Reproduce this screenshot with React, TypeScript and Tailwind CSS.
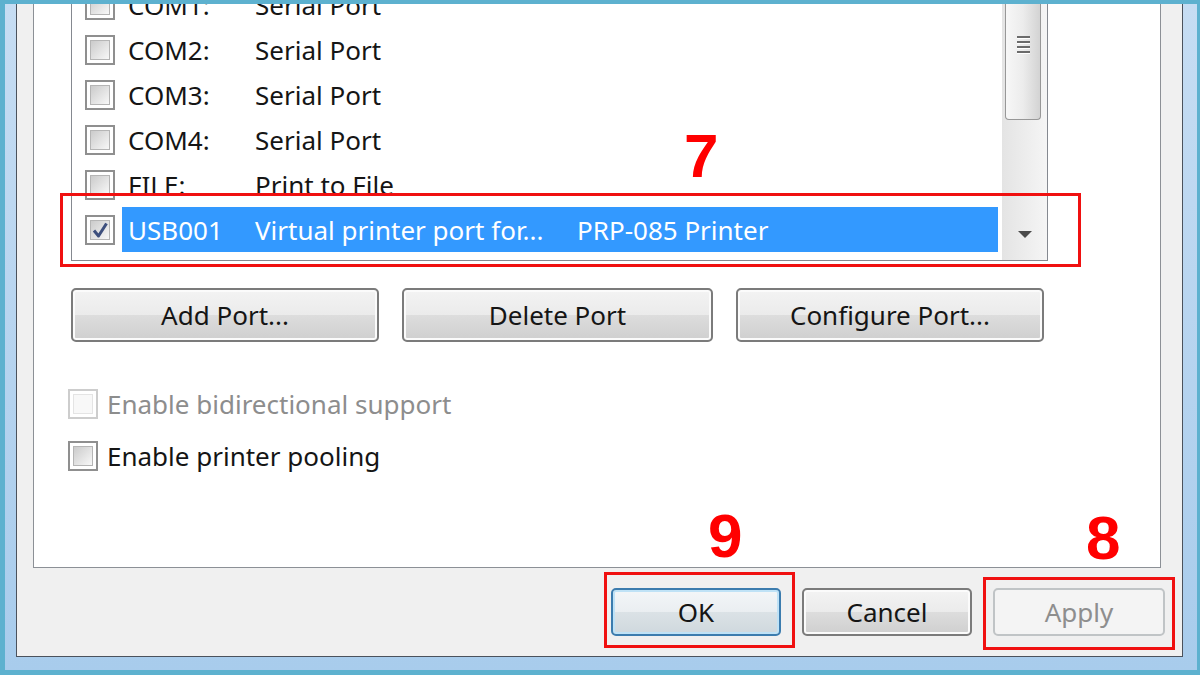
import React from 'react';

type Port = { name: string; desc: string; printer?: string; checked?: boolean; selected?: boolean };

const ports: Port[] = [
  { name: 'COM1:', desc: 'Serial Port' },
  { name: 'COM2:', desc: 'Serial Port' },
  { name: 'COM3:', desc: 'Serial Port' },
  { name: 'COM4:', desc: 'Serial Port' },
  { name: 'FILE:', desc: 'Print to File' },
  { name: 'USB001', desc: 'Virtual printer port for...', printer: 'PRP-085 Printer', checked: true, selected: true },
];

function CheckBox({ checked, disabled }: { checked?: boolean; disabled?: boolean }) {
  return (
    <span
      className={`flex h-[30px] w-[30px] shrink-0 items-center justify-center border-2 bg-white ${
        disabled ? 'border-[#cdcdcd]' : 'border-[#8f8f8f]'
      }`}
    >
      <span
        className={`flex h-[20px] w-[20px] items-center justify-center border ${
          disabled
            ? 'border-[#e4e4e4] bg-[#f8f8f8]'
            : 'border-[#b5b5b5] bg-gradient-to-br from-[#cbcbcb] to-[#f8f8f8]'
        }`}
      >
        {checked && (
          <svg width="18" height="18" viewBox="0 0 18 18">
            <path d="M3 9.5 L7.5 15 L15.5 2.5" fill="none" stroke="#3d4f7d" strokeWidth="3" strokeLinejoin="round" />
          </svg>
        )}
      </span>
    </span>
  );
}

function Button({
  label,
  className,
  kind = 'normal',
}: {
  label: string;
  className: string;
  kind?: 'normal' | 'default' | 'disabled';
}) {
  const look =
    kind === 'default'
      ? 'border-2 border-[#3c7cae] shadow-[inset_0_0_0_2px_#bfe2f6] bg-[linear-gradient(to_bottom,#f3f6f8_0%,#eaeef1_50%,#dbe2e6_50%,#cfd8dd_100%)] text-[#151515]'
      : kind === 'disabled'
        ? 'border-2 border-[#c0c4c6] bg-[#f4f4f4] text-[#8e8e8e]'
        : 'border-2 border-[#7b7b7b] shadow-[inset_0_0_0_2px_#fbfbfb] bg-[linear-gradient(to_bottom,#f3f3f3_0%,#ebebeb_50%,#dddddd_50%,#cfcfcf_100%)] text-[#151515]';
  return (
    <div className={`flex shrink-0 items-center justify-center rounded-[5px] text-[26px] leading-none ${look} ${className}`}>
      {label}
    </div>
  );
}

export default function App() {
  return (
    <div className="relative h-[675px] w-[1200px] overflow-hidden bg-[#5db1cf] pb-[5px] pl-[5px] pr-[3px] pt-[4px] font-['Noto_Sans',sans-serif]">
      {/* window glass frame */}
      <div className="flex h-full flex-col bg-gradient-to-b from-[#c6ddf3] to-[#a8ccec] pb-[13px] pl-[11px] pr-[14px]">
        {/* dialog body */}
        <div className="flex flex-1 flex-col border-x border-b border-[#4b525c] bg-[#f0f0f0]">
          {/* tab page */}
          <div className="ml-[16px] mr-[21px] flex h-[564px] flex-col border-x border-b border-[#8c9096] bg-white">
            {/* port list */}
            <div className="ml-[37px] flex h-[257px] w-[977px] overflow-hidden border-b border-l border-r border-[#858990]">
              <div className="flex-1 overflow-hidden pr-[4px]">
                <div className="-mt-[22px] flex flex-col">
                  {ports.map((p) => (
                    <div key={p.name} className="flex h-[45px] items-center pl-[13px]">
                      <CheckBox checked={p.checked} />
                      <div
                        className={`ml-[7px] flex h-[45px] flex-1 items-center pl-[6px] text-[26px] leading-none ${
                          p.selected ? 'bg-[#3399ff] text-white' : 'text-[#151515]'
                        }`}
                      >
                        <span className="w-[127px] shrink-0">{p.name}</span>
                        <span className="w-[322px] shrink-0">{p.desc}</span>
                        {p.printer && <span>{p.printer}</span>}
                      </div>
                    </div>
                  ))}
                </div>
              </div>
              {/* vertical scrollbar */}
              <div className="flex w-[45px] shrink-0 flex-col bg-gradient-to-r from-[#e4e4e4] to-[#f5f5f5]">
                <div className="ml-[3px] mr-[6px] flex h-[116px] flex-col items-center rounded-b-[4px] border-x border-b border-[#979797] bg-gradient-to-r from-[#f7f7f7] via-[#ececec] to-[#d3d3d3]">
                  <div className="mt-[32px] flex flex-col gap-[3px]">
                    {[0, 1, 2, 3].map((i) => (
                      <span key={i} className="block h-[2px] w-[13px] bg-[#6b6b6b] shadow-[0_1px_0_#ffffff]" />
                    ))}
                  </div>
                </div>
                <div className="flex-1" />
                <div className="flex h-[46px] items-center justify-center pb-[4px]">
                  <svg width="14" height="8" viewBox="0 0 14 8">
                    <path d="M0 0 H14 L7 7 Z" fill="#4a4a4a" />
                  </svg>
                </div>
              </div>
            </div>

            {/* port buttons */}
            <div className="ml-[37px] mt-[27px] flex gap-[23px]">
              <Button label="Add Port..." className="h-[54px] w-[308px]" />
              <Button label="Delete Port" className="h-[54px] w-[311px]" />
              <Button label="Configure Port..." className="h-[54px] w-[308px]" />
            </div>

            {/* options */}
            <div className="ml-[34px] mt-[47px] flex flex-col gap-[22px] text-[26px] leading-none">
              <div className="flex h-[30px] items-center gap-[9px] text-[#8d8d8d]">
                <CheckBox disabled />
                <span>Enable bidirectional support</span>
              </div>
              <div className="flex h-[30px] items-center gap-[9px] text-[#151515]">
                <CheckBox />
                <span>Enable printer pooling</span>
              </div>
            </div>
          </div>

          {/* dialog buttons */}
          <div className="flex justify-end gap-[21px] pr-[17px] pt-[20px]">
            <Button label="OK" kind="default" className="h-[48px] w-[170px]" />
            <Button label="Cancel" className="h-[48px] w-[170px]" />
            <Button label="Apply" kind="disabled" className="h-[48px] w-[172px]" />
          </div>
        </div>
      </div>

      {/* red annotations */}
      <div className="absolute left-[60px] top-[193px] h-[74px] w-[1021px] border-[3px] border-[#f01010]" />
      <div className="absolute left-[604px] top-[572px] h-[76px] w-[191px] border-[3px] border-[#f01010]" />
      <div className="absolute left-[983px] top-[577px] h-[73px] w-[192px] border-[3px] border-[#f01010]" />
      <span className="absolute left-[684px] top-[125px] font-['Liberation_Sans',sans-serif] text-[62px] font-bold leading-none text-[#ff0000]">7</span>
      <span className="absolute left-[708px] top-[505px] font-['Liberation_Sans',sans-serif] text-[62px] font-bold leading-none text-[#ff0000]">9</span>
      <span className="absolute left-[1086px] top-[507px] font-['Liberation_Sans',sans-serif] text-[62px] font-bold leading-none text-[#ff0000]">8</span>
    </div>
  );
}
